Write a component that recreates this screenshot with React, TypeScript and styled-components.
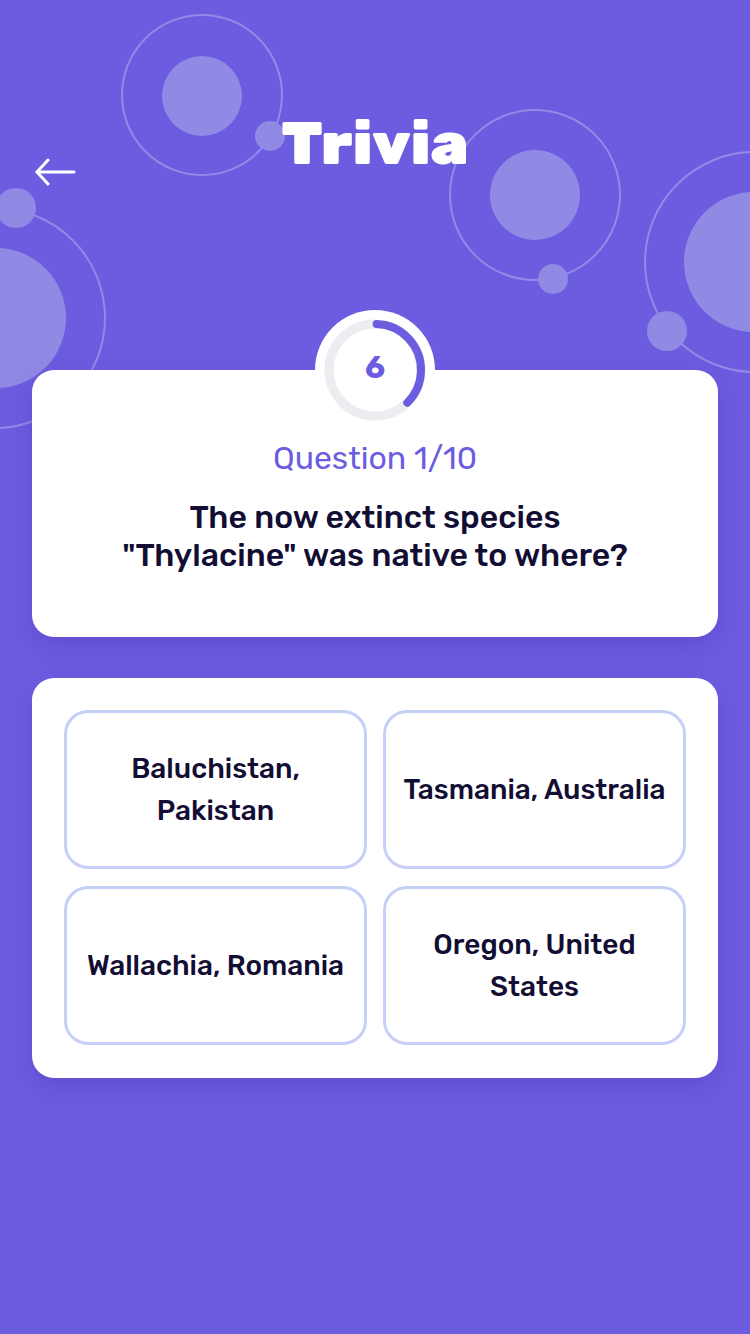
import React from "react";
import styled, { createGlobalStyle } from "styled-components";

const GlobalStyle = createGlobalStyle`
  html, body { margin: 0; padding: 0; background: #6c5ce0; }
  * { box-sizing: border-box; }
  body { font-family: "Rubik", Inter, "Noto Sans", sans-serif; }
`;

const Page = styled.div`
  position: relative;
  width: 750px;
  min-height: 1334px;
  background: #6c5ce0;
  overflow: hidden;
`;

const Decor = styled.svg`
  position: absolute;
  top: 0;
  left: 0;
  z-index: 0;
`;

const Content = styled.div`
  position: relative;
  z-index: 1;
  display: flex;
  flex-direction: column;
  padding: 0 32px;
`;

const Header = styled.header`
  display: grid;
  grid-template-columns: 1fr auto 1fr;
  align-items: start;
  height: 175px;
  padding-top: 111px;
`;

const BackButton = styled.button`
  justify-self: start;
  margin-top: 47px;
  margin-left: 2px;
  padding: 0;
  border: 0;
  background: none;
  display: flex;
  cursor: pointer;
`;

const Title = styled.h1`
  margin: 0;
  font-family: "Rubik", Inter, sans-serif;
  font-weight: 900;
  font-size: 61px;
  line-height: 64px;
  color: #ffffff;
`;

const Card = styled.section<{ $top: number; $pad: string }>`
  position: relative;
  margin-top: ${(p) => p.$top}px;
  background: #ffffff;
  border-radius: 22px;
  padding: ${(p) => p.$pad};
  box-shadow: 0 10px 24px rgba(60, 40, 160, 0.25);
`;

const QuestionCard = styled(Card)`
  display: flex;
  flex-direction: column;
  align-items: center;
  text-align: center;
`;

const TimerWrap = styled.div`
  position: absolute;
  left: 50%;
  top: -60px;
  transform: translateX(-50%);
  width: 120px;
  height: 120px;
  border-radius: 50%;
  background: #ffffff;
  display: flex;
  align-items: center;
  justify-content: center;
`;

const TimerSvg = styled.svg`
  position: absolute;
  inset: 0;
`;

const TimerNumber = styled.span`
  position: relative;
  font-weight: 700;
  font-size: 31px;
  line-height: 1;
  color: #6c5ce0;
  margin-top: -6px;
`;

const QuestionLabel = styled.div`
  font-size: 32px;
  line-height: 40px;
  font-weight: 400;
  color: #6c5ce0;
`;

const QuestionText = styled.p`
  margin: 20px 0 0;
  font-size: 32px;
  line-height: 38px;
  font-weight: 500;
  color: #120e33;
  max-width: 530px;
`;

const AnswerGrid = styled.div`
  display: grid;
  grid-template-columns: 1fr 1fr;
  column-gap: 16px;
  row-gap: 17px;
`;

const AnswerButton = styled.button`
  height: 159px;
  border: 3px solid #c6cff8;
  border-radius: 24px;
  background: #ffffff;
  padding: 0 16px;
  display: flex;
  align-items: center;
  justify-content: center;
  text-align: center;
  font-family: "Rubik", Inter, sans-serif;
  font-size: 28px;
  line-height: 42px;
  font-weight: 500;
  color: #120e33;
  cursor: pointer;
`;

const answers = [
  "Baluchistan, Pakistan",
  "Tasmania, Australia",
  "Wallachia, Romania",
  "Oregon, United States",
];

const ring = "rgba(255,255,255,0.28)";
const fill = "#918ae4";

function Background() {
  return (
    <Decor width="750" height="460" viewBox="0 0 750 460">
      <g fill="none" stroke={ring} strokeWidth="2">
        <circle cx="202" cy="95" r="80" />
        <circle cx="535" cy="195" r="85" />
        <circle cx="755" cy="262" r="110" />
        <circle cx="-5" cy="318" r="110" />
      </g>
      <g fill={fill}>
        <circle cx="202" cy="96" r="40" />
        <circle cx="270" cy="136" r="15" />
        <circle cx="535" cy="195" r="45" />
        <circle cx="553" cy="279" r="15" />
        <circle cx="754" cy="262" r="70" />
        <circle cx="667" cy="331" r="20" />
        <circle cx="-4" cy="318" r="70" />
        <circle cx="16" cy="208" r="20" />
      </g>
    </Decor>
  );
}

function Timer({ value, progress }: { value: number; progress: number }) {
  const r = 46;
  const c = 2 * Math.PI * r;
  return (
    <TimerWrap>
      <TimerSvg width="120" height="120" viewBox="0 0 120 120">
        <circle cx="60" cy="60" r={r} fill="none" stroke="#ececf1" strokeWidth="9" />
        <circle
          cx="60"
          cy="60"
          r={r}
          fill="none"
          stroke="#6c5ce0"
          strokeWidth="8"
          strokeLinecap="round"
          strokeDasharray={`${c * progress} ${c}`}
          transform="rotate(-88 60 60)"
        />
      </TimerSvg>
      <TimerNumber>{value}</TimerNumber>
    </TimerWrap>
  );
}

export default function App() {
  return (
    <>
      <GlobalStyle />
      <Page>
        <Background />
        <Content>
          <Header>
            <BackButton aria-label="Back">
              <svg width="42" height="28" viewBox="0 0 42 28" fill="none" stroke="#ffffff" strokeWidth="3" strokeLinecap="round" strokeLinejoin="round">
                <path d="M40 14H3" />
                <path d="M14 2L3 14l11 12" />
              </svg>
            </BackButton>
            <Title>Trivia</Title>
            <div />
          </Header>

          <QuestionCard $top={195} $pad="68px 40px 63px">
            <Timer value={6} progress={0.37} />
            <QuestionLabel>Question 1/10</QuestionLabel>
            <QuestionText>
              The now extinct species "Thylacine" was native to where?
            </QuestionText>
          </QuestionCard>

          <Card $top={41} $pad="32px 32px 33px">
            <AnswerGrid>
              {answers.map((a) => (
                <AnswerButton key={a}>{a}</AnswerButton>
              ))}
            </AnswerGrid>
          </Card>
        </Content>
      </Page>
    </>
  );
}
